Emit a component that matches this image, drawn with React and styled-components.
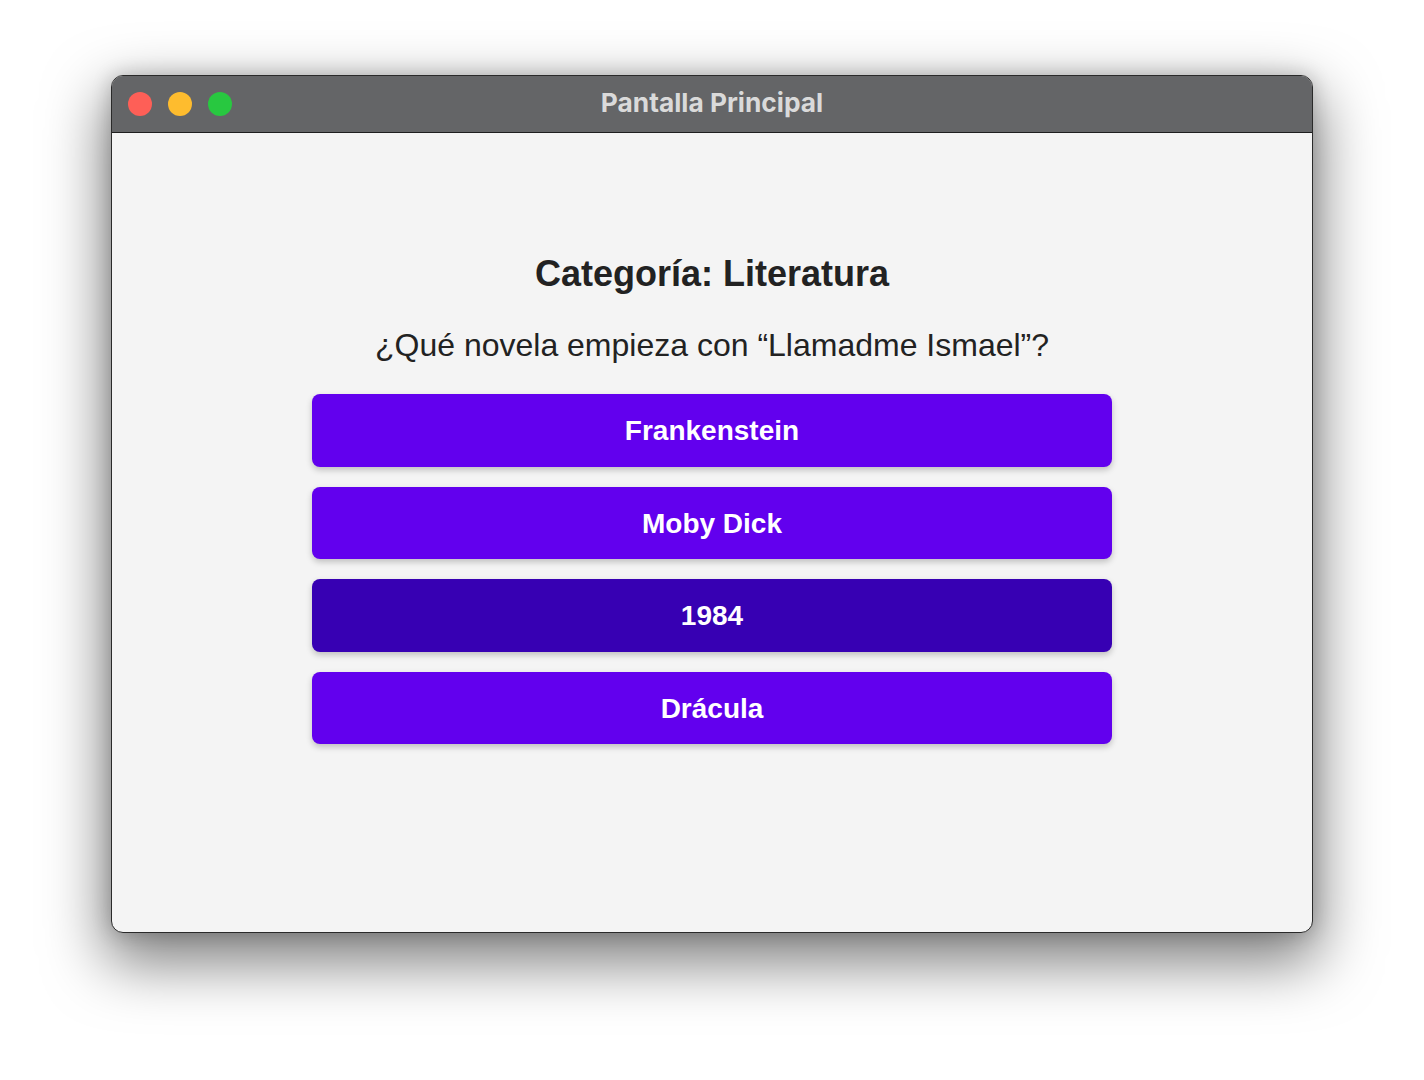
import React from "react";
import styled, { createGlobalStyle } from "styled-components";

const Global = createGlobalStyle`
  html, body { margin: 0; padding: 0; background: #ffffff; }
  body { font-family: "Liberation Sans", Arial, sans-serif; }
  * { box-sizing: border-box; }
`;

const Page = styled.div`
  width: 1424px;
  height: 1080px;
  display: flex;
  justify-content: center;
  padding-top: 75px;
  background: #ffffff;
  overflow: hidden;
`;

const Window = styled.div`
  width: 1202px;
  height: 858px;
  border: 1px solid #2a2a2a;
  border-radius: 12px;
  overflow: hidden;
  display: flex;
  flex-direction: column;
  background: #f4f4f4;
  box-shadow: 0 24px 60px 6px rgba(0, 0, 0, 0.5), 0 0 20px rgba(0, 0, 0, 0.2);
`;

const TitleBar = styled.div`
  position: relative;
  height: 57px;
  flex: none;
  background: #646567;
  border-bottom: 1px solid #1e1e1e;
  display: flex;
  align-items: center;
  padding-left: 16px;
`;

const Lights = styled.div`
  display: flex;
  gap: 16px;
`;

const Light = styled.span`
  width: 24px;
  height: 24px;
  border-radius: 50%;
  background: ${(p) => p.$c};
`;

const Title = styled.div`
  position: absolute;
  left: 0;
  right: 0;
  top: 0;
  bottom: 0;
  display: flex;
  align-items: center;
  justify-content: center;
  padding-bottom: 3px;
  font-family: Inter, "Open Sans", sans-serif;
  font-weight: 700;
  font-size: 26.3px;
  color: #dadada;
  pointer-events: none;
`;

const Content = styled.div`
  flex: 1;
  display: flex;
  flex-direction: column;
  align-items: center;
  padding-top: 120px;
`;

const Heading = styled.h2`
  margin: 0;
  font-family: "Liberation Sans", Arial, sans-serif;
  font-weight: 700;
  font-size: 36px;
  color: #222222;
`;

const Question = styled.p`
  margin: 32px 0 30px;
  font-family: "Liberation Sans", Arial, sans-serif;
  font-size: 32px;
  color: #222222;
`;

const Options = styled.div`
  display: flex;
  flex-direction: column;
  gap: 20px;
  width: 800px;
`;

const Option = styled.button`
  height: 72.5px;
  border: none;
  border-radius: 8px;
  padding: 2px 0 0;
  background: ${(p) => (p.$active ? "#3700b3" : "#6200ee")};
  color: #ffffff;
  font-family: "Liberation Sans", Arial, sans-serif;
  font-weight: 700;
  font-size: 28px;
  box-shadow: 0 3px 6px rgba(0, 0, 0, 0.22);
  cursor: pointer;
  display: flex;
  align-items: center;
  justify-content: center;
`;

const options = ["Frankenstein", "Moby Dick", "1984", "Drácula"];

export default function App() {
  return (
    <Page>
      <Global />
      <Window>
        <TitleBar>
          <Lights>
            <Light $c="#fe5f57" />
            <Light $c="#febc2e" />
            <Light $c="#28c840" />
          </Lights>
          <Title>Pantalla Principal</Title>
        </TitleBar>
        <Content>
          <Heading>Categoría: Literatura</Heading>
          <Question>¿Qué novela empieza con “Llamadme Ismael”?</Question>
          <Options>
            {options.map((o) => (
              <Option key={o} $active={o === "1984"}>
                {o}
              </Option>
            ))}
          </Options>
        </Content>
      </Window>
    </Page>
  );
}
